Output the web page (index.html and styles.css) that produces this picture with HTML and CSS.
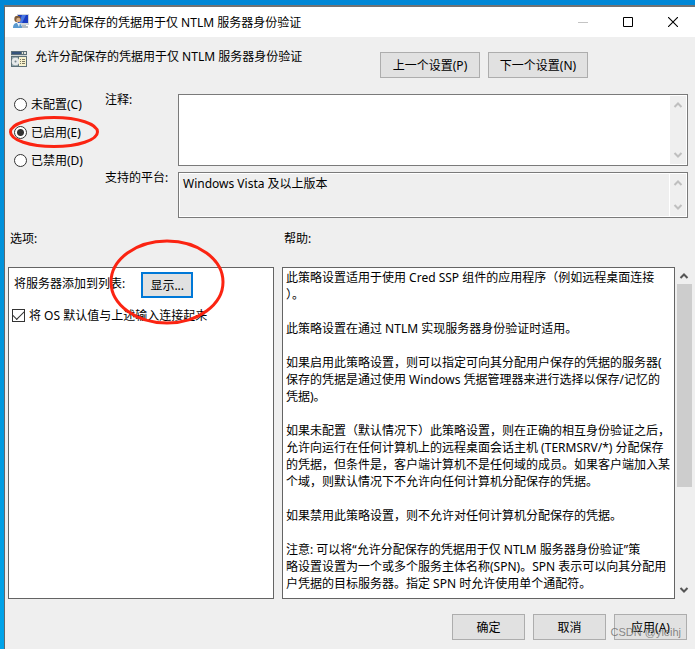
FILE: index.html
```html
<!DOCTYPE html>
<html lang="zh-CN">
<head>
  <meta charset="UTF-8">
  <meta name="viewport" content="width=device-width, initial-scale=1.0">
  <title>允许分配保存的凭据用于仅 NTLM 服务器身份验证</title>
  <link rel="stylesheet" href="styles.css">
</head>
<body>
  <main class="window">
    <header class="titlebar">
      <svg class="icon" viewBox="0 0 16 16" aria-hidden="true">
        <path d="M4 0h12v11H4z" fill="#cfd5da"/>
        <path d="M5 1h10v8H5z" fill="#1a3cc0"/>
        <path d="M9 1h4L9 9H6z" fill="#4a78e4"/>
        <path d="M9 11h4v1h2v2H8v-2h1z" fill="#b4bcc4"/>
        <path d="M0 14c0-4 2-5 4-5s5 1 5 5z" fill="#5a9ad0"/>
        <path d="M4 9h3l-1 4z" fill="#eef4f8"/>
        <circle cx="4.5" cy="5" r="3.2" fill="#7d5c3a"/>
        <circle cx="5.4" cy="6" r="2.2" fill="#dcae84"/>
      </svg>
      <span class="titlebar-text">允许分配保存的凭据用于仅 NTLM 服务器身份验证</span>
      <div class="titlebar-buttons">
        <button type="button" aria-label="最小化" disabled>
          <svg viewBox="0 0 10 10"><path d="M0 5.5h10" stroke="#c4c4c4"/></svg>
        </button>
        <button type="button" aria-label="最大化">
          <svg viewBox="0 0 10 10"><path d="M.5.5h9v9h-9z" fill="none" stroke="#000"/></svg>
        </button>
        <button type="button" aria-label="关闭">
          <svg viewBox="0 0 10 10"><path d="M0 0l10 10M10 0L0 10" stroke="#000" stroke-width="1.1"/></svg>
        </button>
      </div>
    </header>

    <form class="dialog">
      <div class="policy">
        <svg class="icon" viewBox="0 0 16 16" aria-hidden="true">
          <path d="M0 0h16v16H0z" fill="#5d7078"/>
          <path d="M1 1h9v2H1z" fill="#35527c"/>
          <path d="M11 1h1v2h-1zM13 1h2v2h-2z" fill="#e4e4dc"/>
          <path d="M0 4h16v1H0z" fill="#d3d7d6"/>
          <path d="M1 6h6v9H1z" fill="#8fa3a8"/>
          <circle cx="4.5" cy="10.5" r="3.8" fill="#e6e9ea"/>
          <circle cx="4.5" cy="10.5" r="1" fill="#74858c"/>
          <path d="M8 6h7v9H8z" fill="#f7f1cd"/>
          <path d="M9 8.5h1M11 8.5h3M9 10.5h1M11 10.5h3M9 12.5h1M11 12.5h3" stroke="#7c7963"/>
        </svg>
        <span class="policy-name">允许分配保存的凭据用于仅 NTLM 服务器身份验证</span>
        <button type="button" class="btn btn-nav">上一个设置(P)</button>
        <button type="button" class="btn btn-nav">下一个设置(N)</button>
      </div>

      <div class="settings">
        <div class="states">
          <label><input type="radio" name="state">未配置(C)</label>
          <label class="marked"><input type="radio" name="state" checked>已启用(E)
            <svg class="mark mark-state" viewBox="0 0 90 32" aria-hidden="true"><ellipse cx="45" cy="16" rx="43.5" ry="14.5"/></svg>
          </label>
          <label><input type="radio" name="state">已禁用(D)</label>
        </div>
        <div class="fields">
          <label for="comment">注释:</label>
          <div class="field field-comment">
            <textarea id="comment"></textarea>
            <div class="scroll scroll-off">
              <svg viewBox="0 0 10 8"><path d="M1.5 6L5 2.5 8.500 6"/></svg>
              <svg viewBox="0 0 10 8"><path d="M1.500 2L5 5.500 8.500 2"/></svg>
            </div>
          </div>
          <label for="platform">支持的平台:</label>
          <div class="field field-platform">
            <textarea id="platform" readonly>Windows Vista 及以上版本</textarea>
            <div class="scroll scroll-off">
              <svg viewBox="0 0 10 8"><path d="M1.5 6L5 2.5 8.5 6"/></svg>
              <svg viewBox="0 0 10 8"><path d="M1.5 2L5 5.5 8.5 2"/></svg>
            </div>
          </div>
        </div>
      </div>

      <div class="panels">
        <section class="options">
          <h2>选项:</h2>
          <div class="panel">
            <div class="option-row">
              <label for="show">将服务器添加到列表:</label>
              <div class="marked">
                <button type="button" id="show" class="btn btn-show">显示...</button>
                <svg class="mark mark-show" viewBox="0 0 116 86" aria-hidden="true"><ellipse cx="58" cy="43" rx="56" ry="41"/></svg>
              </div>
            </div>
            <label class="check"><input type="checkbox" checked>将 OS 默认值与上述输入连接起来</label>
          </div>
        </section>

        <section class="help">
          <h2>帮助:</h2>
          <div class="help-body">
            <div class="panel help-text">
              <p>此策略设置适用于使用 Cred SSP 组件的应用程序（例如远程桌面连接<br>）。</p>
              <p>此策略设置在通过 NTLM 实现服务器身份验证时适用。</p>
              <p>如果启用此策略设置，则可以指定可向其分配用户保存的凭据的服务器(<br>保存的凭据是通过使用 Windows 凭据管理器来进行选择以保存/记忆的<br>凭据)。</p>
              <p>如果未配置（默认情况下）此策略设置，则在正确的相互身份验证之后，<br>允许向运行在任何计算机上的远程桌面会话主机 (TERMSRV/*) 分配保存<br>的凭据，但条件是，客户端计算机不是任何域的成员。如果客户端加入某<br>个域，则默认情况下不允许向任何计算机分配保存的凭据。</p>
              <p>如果禁用此策略设置，则不允许对任何计算机分配保存的凭据。</p>
              <p>注意: 可以将“允许分配保存的凭据用于仅 NTLM 服务器身份验证”策<br>略设置设置为一个或多个服务主体名称(SPN)。SPN 表示可以向其分配用<br>户凭据的目标服务器。指定 SPN 时允许使用单个通配符。</p>
            </div>
            <div class="scroll">
              <svg viewBox="0 0 10 8"><path d="M1.5 6L5 2.5 8.5 6"/></svg>
              <div class="track"><div class="thumb"></div></div>
              <svg viewBox="0 0 10 8"><path d="M1.5 2L5 5.5 8.5 2"/></svg>
            </div>
          </div>
        </section>
      </div>

      <footer class="actions">
        <button type="button" class="btn">确定</button>
        <button type="button" class="btn">取消</button>
        <button type="button" class="btn">应用(A)</button>
        <span class="watermark">CSDN @yleihj</span>
      </footer>
    </form>
  </main>
</body>
</html>
```

FILE: styles.css
```css
* {
  box-sizing: border-box;
}
body {
  margin: 0;
  padding: 5px 0 0 4px;
  height: 100vh;
  min-height: 640px;
  background: linear-gradient(to bottom, #0087d6, #0095dc 50%, #00a4ea);
  font-family: "Noto Sans", "Noto Sans CJK SC", sans-serif;
  font-size: 12px;
  line-height: 17px;
  color: #000;
}
button, textarea {
  font: inherit;
  color: inherit;
}
h2, p {
  margin: 0;
  font-size: 12px;
  font-weight: normal;
}
.window {
  display: flex;
  flex-direction: column;
  height: 100%;
  border-top: 2px solid #727272;
  border-left: 1px solid #5f686d;
  background: #efefef;
}
.icon {
  width: 16px;
  height: 16px;
  flex: none;
}

/* title bar */
.titlebar {
  display: flex;
  align-items: center;
  height: 30px;
  padding-left: 8px;
  background: #fff;
}
.titlebar-text {
  flex: 1;
  margin-left: 5px;
  white-space: nowrap;
}
.titlebar-buttons {
  display: flex;
}
.titlebar-buttons button {
  display: flex;
  align-items: center;
  justify-content: center;
  width: 45px;
  height: 30px;
  padding: 0;
  border: 0;
  background: none;
}
.titlebar-buttons svg {
  width: 10px;
  height: 10px;
}

/* dialog */
.dialog {
  display: flex;
  flex: 1;
  flex-direction: column;
  min-height: 0;
}
.policy {
  display: flex;
  padding: 15px 8px 0 6px;
}
.policy .icon {
  margin-top: -1px;
}
.policy-name {
  width: 345px;
  margin: -4px 0 0 8px;
  white-space: nowrap;
}
.btn {
  width: 73px;
  height: 26px;
  padding: 0;
  border: 1px solid #adadad;
  background: #e1e1e1;
}
.btn-nav {
  width: 100px;
}
.btn-nav + .btn-nav {
  margin-left: 8px;
}
.settings {
  display: flex;
  padding: 16px 7px 0 9px;
}
.states {
  display: flex;
  flex-direction: column;
  width: 91px;
  padding-top: 2px;
  gap: 11px;
}
.states label, .check {
  display: flex;
  align-items: center;
}
input {
  appearance: none;
  width: 13px;
  height: 13px;
  margin: 0 4px 0 0;
  border: 1px solid #333;
  background: #fff;
}
input[type="radio"] {
  border-radius: 50%;
}
input[type="radio"]:checked {
  background: radial-gradient(circle, #333 3px, #fff 4px);
}
.fields {
  display: grid;
  flex: 1;
  grid-template-columns: 73px 1fr;
  row-gap: 6px;
}
.fields label {
  margin-top: -3px;
}
.field {
  display: flex;
  padding: 1px;
  border: 1px solid #7a7a7a;
  background: #fff;
}
.field-comment {
  height: 72px;
}
.field-platform {
  height: 46px;
}
.field textarea {
  flex: 1;
  padding: 1px 3px;
  border: 0;
  outline: 0;
  resize: none;
  overflow: hidden;
  background: #fff;
}
.field-platform textarea {
  margin-right: 1px;
  background: #efefef;
}

/* scroll bars */
.scroll {
  display: flex;
  flex-direction: column;
  align-items: center;
  justify-content: space-between;
  width: 16px;
  padding: 5px 0;
  background: #efefef;
}
.scroll svg {
  width: 10px;
  height: 8px;
  flex: none;
  fill: none;
  stroke: #555;
  stroke-width: 2;
}
.scroll-off svg {
  stroke: #bfbfbf;
}
.track {
  flex: 1;
  width: 15px;
  margin: 4px 0;
}
.thumb {
  height: 68%;
  background: #cdcdcd;
}

/* options and help */
.panels {
  display: flex;
  flex: 1;
  gap: 8px;
  min-height: 0;
  padding: 12px 3px 0;
}
.panels h2 {
  margin: 0 2px 20px;
}
.options, .help {
  display: flex;
  flex-direction: column;
}
.options {
  flex: 266;
}
.help {
  flex: 410;
}
.panel {
  flex: 1;
  border: 1px solid #646464;
  background: #fff;
}
.options .panel {
  padding: 4px 3px;
}
.option-row {
  display: flex;
  gap: 16px;
  padding-left: 2px;
}
.option-row label {
  padding-top: 3px;
}
.btn-show {
  display: block;
  width: 52px;
  border: 2px solid #0078d7;
}
.check {
  margin-top: 9px;
}
.check input {
  display: grid;
  place-items: center;
}
.check input:checked::before {
  content: "";
  width: 10px;
  height: 5px;
  margin-top: -3px;
  border: solid #333;
  border-width: 0 0 1px 1px;
  transform: rotate(-45deg);
}
.help-body {
  display: flex;
  flex: 1;
  min-height: 0;
}
.help-body .scroll {
  margin-left: 1px;
}
.help-text {
  padding: 1px 3px;
  overflow: hidden;
  white-space: nowrap;
}
.help-text p + p {
  margin-top: 17px;
}

/* red pen marks over the controls */
.marked {
  position: relative;
}
.mark {
  position: absolute;
  z-index: 1;
  fill: none;
  stroke: #fb2412;
  stroke-width: 3;
  pointer-events: none;
}
.mark-state {
  left: -5px;
  top: -8px;
  width: 90px;
  height: 32px;
}
.mark-show {
  left: -32px;
  top: -33px;
  width: 116px;
  height: 86px;
}

.actions {
  position: relative;
  display: flex;
  justify-content: flex-end;
  gap: 8px;
  padding: 15px 8px 9px;
}
.watermark {
  position: absolute;
  right: 14px;
  bottom: 8px;
  font-family: "Liberation Sans", sans-serif;
  font-size: 11px;
  color: rgba(90, 90, 90, 0.7);
  pointer-events: none;
}
```
